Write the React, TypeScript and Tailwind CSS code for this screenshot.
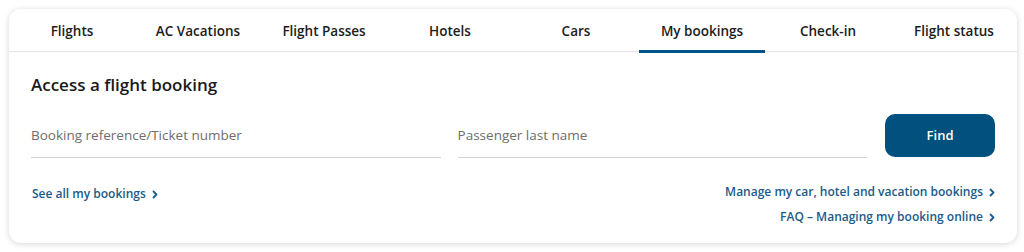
const TABS = [
  "Flights",
  "AC Vacations",
  "Flight Passes",
  "Hotels",
  "Cars",
  "My bookings",
  "Check-in",
  "Flight status",
];

const ACTIVE = "My bookings";

export default function App() {
  return (
    <div className="w-[1024px] h-[252px] bg-white pt-[9px] pl-[9px] font-['Open_Sans',sans-serif]">
      <div className="w-[1008px] h-[234px] rounded-[12px] bg-white shadow-[0_1px_6px_rgba(0,0,0,0.16)] overflow-hidden">
        {/* Tabs */}
        <nav className="flex border-b border-[#e3e3e3]">
          {TABS.map((tab) => (
            <div
              key={tab}
              className="relative w-[126px] h-[42px] pt-[2px] flex items-center justify-center text-[13.5px] font-semibold text-[#1c1c1c]"
            >
              {tab}
              {tab === ACTIVE && (
                <span className="absolute left-0 right-0 -bottom-[2px] h-[3px] bg-[#005487]" />
              )}
            </div>
          ))}
        </nav>

        <div className="px-[22px] pt-[21px]">
          <h2 className="text-[17px] leading-[24px] font-semibold text-[#1a1a1a]">
            Access a flight booking
          </h2>

          {/* Form row */}
          <div className="mt-[17px] flex gap-[17px]">
            <Field label="Booking reference/Ticket number" />
            <Field label="Passenger last name" />
            <button className="ml-[1px] w-[110px] h-[43px] rounded-[10px] bg-[#02507d] text-white text-[13px] font-semibold">
              Find
            </button>
          </div>

          {/* Links */}
          <div className="mt-[25px] flex items-start justify-between">
            <LinkText label="See all my bookings" className="mt-[2px] ml-[1px]" />
            <div className="flex flex-col items-end gap-[7px]">
              <LinkText label="Manage my car, hotel and vacation bookings" />
              <LinkText label="FAQ – Managing my booking online" />
            </div>
          </div>
        </div>
      </div>
    </div>
  );
}

function Field({ label }: { label: string }) {
  return (
    <div className="w-[410px] h-[44px] border-b border-[#d4d4d4] flex items-center">
      <span className="text-[13.5px] text-[#6e6e6e]">{label}</span>
    </div>
  );
}

function LinkText({ label, className = "" }: { label: string; className?: string }) {
  return (
    <a className={`flex items-center gap-[6px] text-[12px] leading-[18px] font-semibold text-[#1b5b89] ${className}`}>
      {label}
      <svg width="6" height="9" viewBox="0 0 6 9" fill="none" stroke="currentColor" strokeWidth="1.8" strokeLinecap="round" strokeLinejoin="round" aria-hidden>
        <path d="M1.5 1.5 4.5 4.5 1.5 7.5" />
      </svg>
    </a>
  );
}
